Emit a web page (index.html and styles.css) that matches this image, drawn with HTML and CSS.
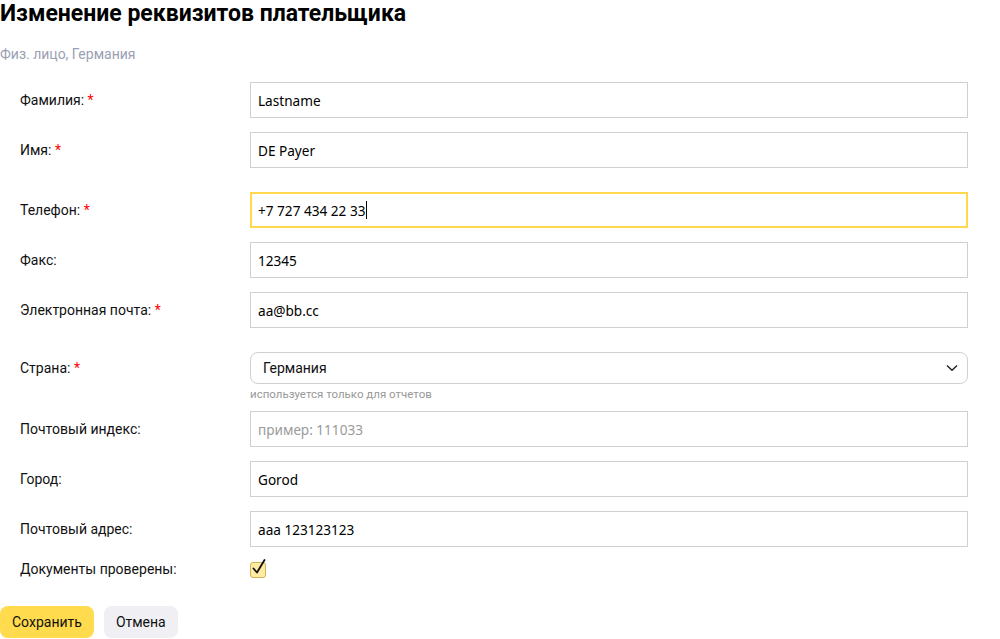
FILE: index.html
```html
<!DOCTYPE html>
<html lang="ru">
<head>
<meta charset="utf-8">
<title>Изменение реквизитов плательщика</title>
<link rel="stylesheet" href="styles.css">
</head>
<body>
<div class="page">
  <h1 class="title">Изменение реквизитов плательщика</h1>
  <div class="subtitle">Физ. лицо, Германия</div>
  <form class="form">
    <div class="group">
      <div class="row"><label class="label">Фамилия: <span class="req">*</span></label><input class="input" value="Lastname"></div>
      <div class="row"><label class="label">Имя: <span class="req">*</span></label><input class="input" value="DE Payer"></div>
    </div>
    <div class="group">
      <div class="row"><label class="label">Телефон: <span class="req">*</span></label><div class="input focused"><span class="value">+7 727 434 22 33</span><span class="caret"></span></div></div>
      <div class="row"><label class="label">Факс:</label><input class="input" value="12345"></div>
      <div class="row"><label class="label">Электронная почта: <span class="req">*</span></label><input class="input" value="aa@bb.cc"></div>
    </div>
    <div class="group">
      <div class="row row-select"><label class="label">Страна: <span class="req">*</span></label>
        <div class="field-col">
          <div class="select"><span>Германия</span>
            <svg class="chevron" width="12" height="8" viewBox="0 0 12 8"><path d="M1 1.5 L6 6.3 L11 1.5" fill="none" stroke="#222" stroke-width="1.4"/></svg>
          </div>
          <div class="hint">используется только для отчетов</div>
        </div>
      </div>
      <div class="row"><label class="label">Почтовый индекс:</label><input class="input" placeholder="пример: 111033"></div>
      <div class="row"><label class="label">Город:</label><input class="input" value="Gorod"></div>
      <div class="row"><label class="label">Почтовый адрес:</label><input class="input" value="aaa 123123123"></div>
      <div class="row row-check"><label class="label">Документы проверены:</label>
        <span class="checkbox">
          <svg class="check" width="20" height="20" viewBox="0 0 20 20"><path d="M4.5 10.5 L8 14.5 L15.5 2" fill="none" stroke="#111" stroke-width="1.8" stroke-linecap="round" stroke-linejoin="round"/></svg>
        </span>
      </div>
    </div>
    <div class="actions">
      <button type="button" class="btn btn-primary">Сохранить</button>
      <button type="button" class="btn btn-secondary">Отмена</button>
    </div>
  </form>
</div>
</body>
</html>
```

FILE: styles.css
```css
* { box-sizing: border-box; }
body {
  margin: 0;
  font-family: Roboto, "Noto Sans", Arial, sans-serif;
  color: #000;
  background: #fff;
}
.page { width: 1000px; }
.title {
  margin: 0;
  font-size: 23px;
  font-weight: 700;
  line-height: 28px;
}
.subtitle {
  margin-top: 18px;
  font-size: 14px;
  line-height: 16px;
  color: #9aa0b4;
}
.form {
  margin-top: 20px;
  display: flex;
  flex-direction: column;
  gap: 24px;
}
.group {
  display: flex;
  flex-direction: column;
  gap: 14px;
}
.row {
  display: grid;
  grid-template-columns: 250px 718px;
  align-items: center;
  min-height: 36px;
}
.row-select { align-items: start; margin-bottom: -3px; }
.row-select .label { line-height: 32px; }
.label {
  padding-left: 20px;
  font-size: 14px;
  line-height: 16px;
  color: #111;
}
.req { color: #f00; }
.input {
  display: flex;
  align-items: center;
  width: 718px;
  height: 36px;
  margin: 0;
  padding: 0 7px;
  border: 1px solid #d0d0d0;
  border-radius: 0;
  font-family: "Noto Sans", "Open Sans", Arial, sans-serif;
  font-size: 13.6px;
  color: #000;
  outline: none;
  background: #fff;
}
.input::placeholder { color: #9a9a9a; }
.input.focused {
  border: 2px solid #ffd84e;
  padding: 0 6px;
}
.caret {
  display: block;
  width: 1px;
  height: 18px;
  margin-left: 1px;
  background: #000;
}
.field-col {
  display: flex;
  flex-direction: column;
  gap: 4px;
}
.select {
  display: flex;
  align-items: center;
  justify-content: space-between;
  height: 32px;
  padding: 0 9px 0 12px;
  border: 1px solid #d0d0d0;
  border-radius: 8px;
  font-size: 14px;
  color: #111;
}
.chevron { display: block; }
.hint {
  font-size: 11.5px;
  line-height: 12px;
  color: #999;
}
.row-check { min-height: 20px; margin-top: -2px; }
.checkbox {
  position: relative;
  display: block;
  width: 16px;
  height: 16px;
  margin-top: 2px;
  border: 1px solid #d4b357;
  border-radius: 3px;
  background: #ffeba1;
}
.check {
  position: absolute;
  left: -2px;
  top: -5px;
}
.actions {
  display: flex;
  gap: 10px;
  margin-top: 3px;
}
.btn {
  height: 32px;
  padding: 0 12px;
  border: 0;
  border-radius: 8px;
  font-family: Roboto, "Noto Sans", Arial, sans-serif;
  font-size: 14px;
  color: #111;
}
.btn-primary { background: #ffdb4d; }
.btn-secondary { background: #f0f0f4; }
```
